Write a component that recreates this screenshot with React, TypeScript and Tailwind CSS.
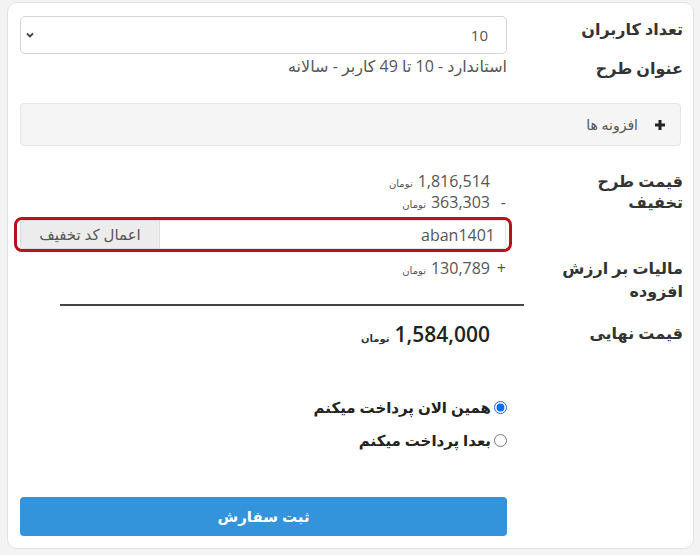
import { useState } from "react";

const font = { fontFamily: '"Open Sans", "DejaVu Sans", sans-serif' };

function Label({ children }: { children: React.ReactNode }) {
  return <div className="text-[16px] font-bold text-[#333] leading-[21px]">{children}</div>;
}

function Price({ sign, value }: { sign?: string; value: string }) {
  return (
    <div className="flex items-baseline h-[21px] leading-[21px] text-[16px] text-[#555]">
      <span className="w-[17px] text-right pr-[1px]">{sign}</span>
      <span>{value}</span>
      <span className="mr-[5px] text-[10px] text-[#555]">تومان</span>
    </div>
  );
}

export default function App() {
  const [pay, setPay] = useState("now");

  return (
    <div dir="rtl" style={font} className="min-h-[555px] bg-[#f3f3f3] pt-[2px] pl-[7px] pr-[6px]">
      <div className="w-[687px] h-[547px] bg-white border border-[#e2e2e2] rounded-[10px] pt-[13px] pr-[10px] pl-[12px] pb-[12px]">
        {/* users count */}
        <div className="grid grid-cols-[176px_487px]">
          <div className="pt-[3px]">
            <Label>تعداد کاربران</Label>
          </div>
          <div className="relative">
            <select
              defaultValue="10"
              className="appearance-none w-full h-[38px] border border-[#d4d4d4] rounded-[5px] bg-white pr-[18px] text-[15px] text-[#555] outline-none"
            >
              <option value="10">10</option>
              <option value="20">20</option>
            </select>
            <svg className="absolute left-[5px] top-[14px] pointer-events-none" width="10" height="10" viewBox="0 0 10 10">
              <path d="M2 3.5 L5 6.5 L8 3.5" fill="none" stroke="#444" strokeWidth="1.8" />
            </svg>
          </div>
        </div>

        {/* plan title */}
        <div className="grid grid-cols-[176px_487px] mt-[2px]">
          <div className="pt-[2px]">
            <Label>عنوان طرح</Label>
          </div>
          <div className="text-[16px] text-[#555] leading-[21px]">استاندارد - 10 تا 49 کاربر - سالانه</div>
        </div>

        {/* addons */}
        <div className="mt-[24px] mr-[2px] h-[43px] bg-[#f5f5f5] border border-[#e6e6e6] rounded-[4px] flex items-center pr-[14px] gap-[16px] text-[14px] text-[#555]">
          <svg width="12" height="12" viewBox="0 0 12 12">
            <path d="M6 1 V11 M1 6 H11" stroke="#222" strokeWidth="3" />
          </svg>
          <span>افزونه ها</span>
        </div>

        {/* prices */}
        <div className="grid grid-cols-[176px_487px] mt-[25px]">
          <div>
            <Label>قیمت طرح</Label>
            <Label>تخفیف</Label>
          </div>
          <div>
            <Price value="1,816,514" />
            <Price sign="-" value="363,303" />
          </div>
        </div>

        {/* discount code */}
        <div className="mt-[4px] mr-[171px] -ml-[6px] px-[3px] border-[3px] border-[#b5121b] rounded-[8px]">
          <div className="flex h-[29px]">
            <input
              defaultValue="aban1401"
              className="flex-1 min-w-0 h-full bg-white pr-[10px] text-[16px] text-[#555] outline-none border-y border-r border-[#e5e5e5]"
            />
            <button className="w-[140px] h-full bg-[#ececec] border border-[#dcdcdc] text-[15px] text-[#555]">
              اعمال کد تخفیف
            </button>
          </div>
        </div>

        {/* tax */}
        <div className="grid grid-cols-[176px_487px] mt-[5px]">
          <div className="text-[16px] font-bold text-[#333] leading-[23px]">
            مالیات بر ارزش
            <br />
            افزوده
          </div>
          <div className="pt-[1px]">
            <Price sign="+" value="130,789" />
          </div>
        </div>

        <div className="mt-[1px] mr-[159px] ml-[40px] h-[1.5px] bg-[#444]" />

        {/* final */}
        <div className="grid grid-cols-[176px_487px] mt-[14px]">
          <div className="pt-[3px]">
            <Label>قیمت نهایی</Label>
          </div>
          <div className="flex items-baseline h-[28px] pr-[17px] leading-[28px]">
            <span className="text-[21px] font-semibold text-[#222]">1,584,000</span>
            <span className="mr-[5px] text-[10px] font-bold text-[#333]">تومان</span>
          </div>
        </div>

        {/* payment choice */}
        <div className="mr-[176px] w-[487px]">
          <label className="mt-[49px] flex items-center gap-[3px] h-[22px] text-[15px] font-bold text-[#222]">
            <input
              type="radio"
              name="pay"
              checked={pay === "now"}
              onChange={() => setPay("now")}
              className="w-[13px] h-[13px] m-0 accent-[#0a6cf5]"
            />
            همین الان پرداخت میکنم
          </label>
          <label className="mt-[11px] flex items-center gap-[3px] h-[22px] text-[15px] font-bold text-[#222]">
            <input
              type="radio"
              name="pay"
              checked={pay === "later"}
              onChange={() => setPay("later")}
              className="w-[13px] h-[13px] m-0 accent-[#0a6cf5]"
            />
            بعدا پرداخت میکنم
          </label>

          <button className="mt-[45px] w-full h-[39px] rounded-[4px] bg-[#3393db] text-white text-[15px] font-bold">
            ثبت سفارش
          </button>
        </div>
      </div>
    </div>
  );
}
